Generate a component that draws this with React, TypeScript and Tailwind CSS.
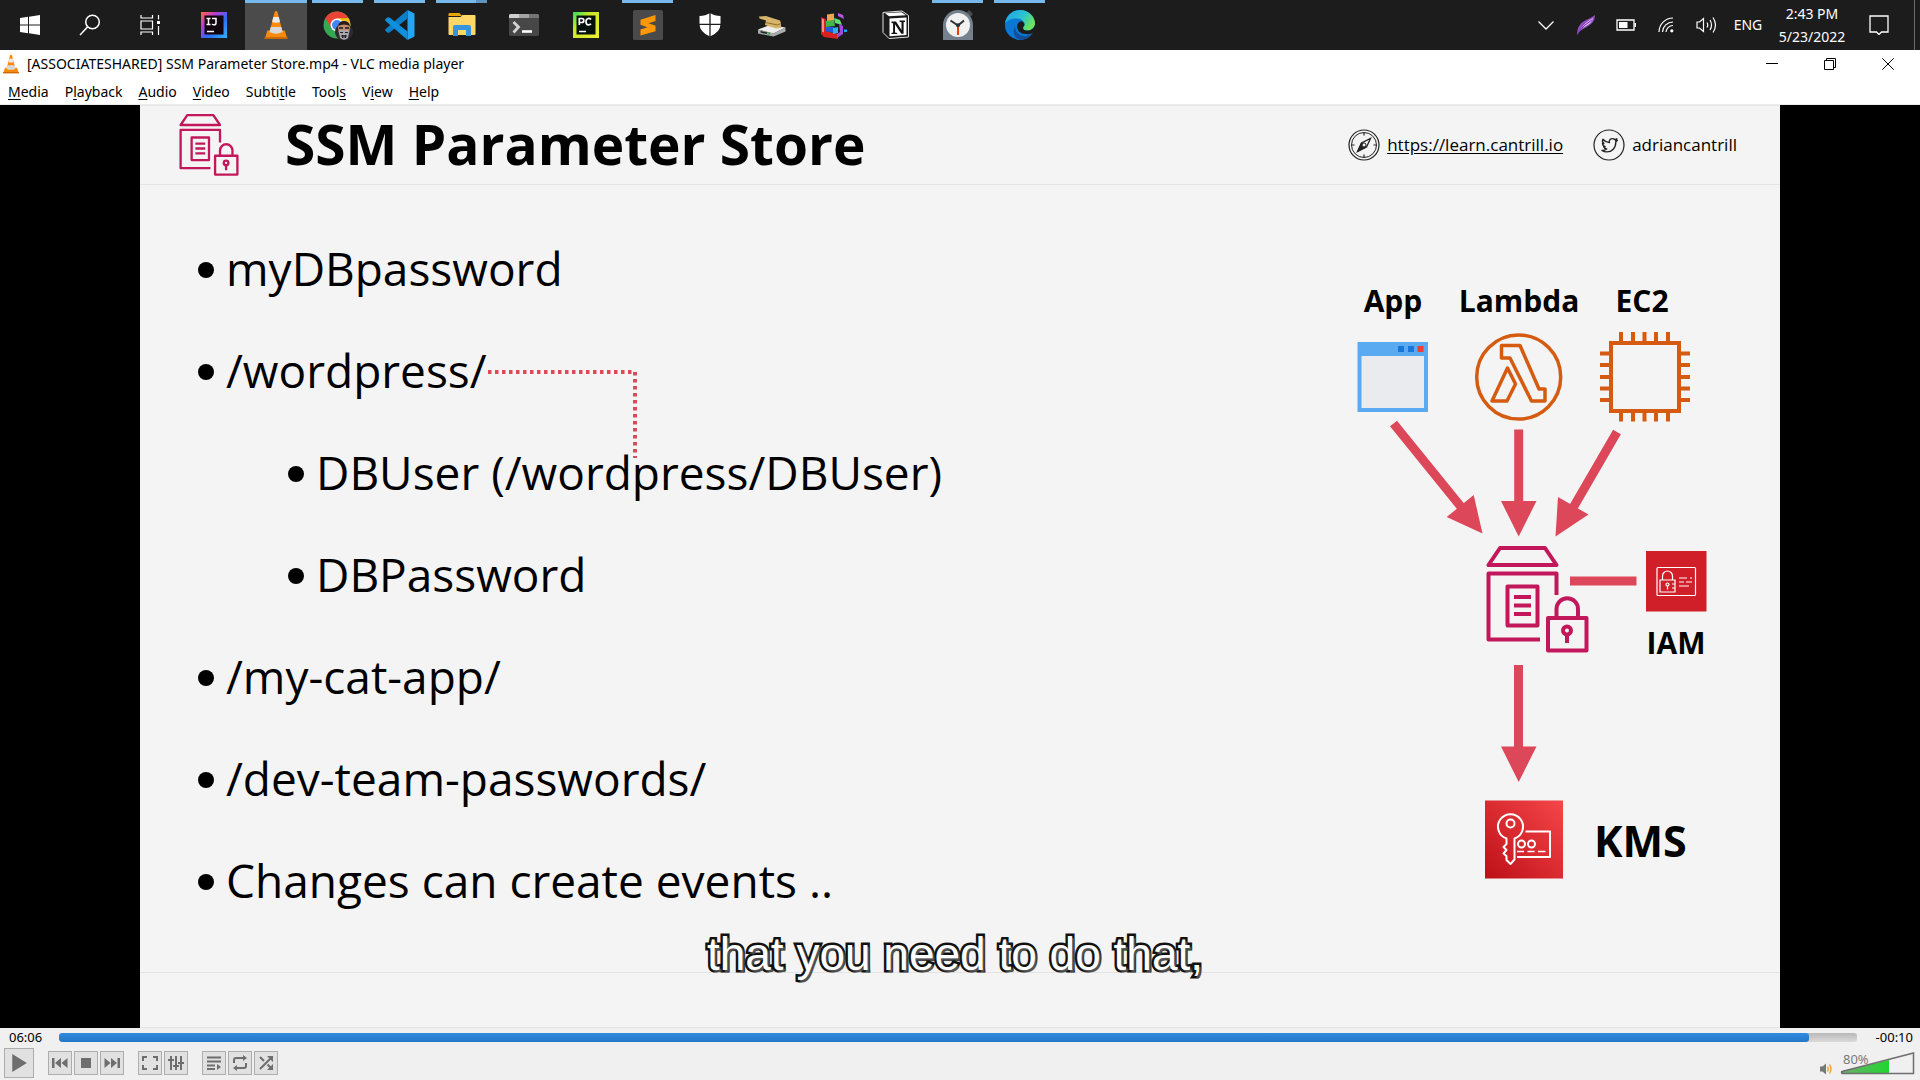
import React from "react";

type Kids = { children: React.ReactNode };

const UI = "font-['Noto_Sans','Open_Sans',sans-serif]";

function Icon({ children }: Kids) {
  return (
    <svg viewBox="0 0 30 30" className="size-[30px]" aria-hidden="true">
      {children}
    </svg>
  );
}

function Cone() {
  return (
    <>
      <path d="M5 20.500h20l3 8.500H2z" fill="#f58a0b" />
      <path d="M2 27h26l.4 2H1.600z" fill="#c96a04" />
      <path d="M13.500 1.500q1.500-1 3 0L22.500 22q-7.500 4-15 0z" fill="#ff8a0c" />
      <path d="M11.900 7h6.200l1.500 5q-4.600 1.600-9.200 0z" fill="#e9e9e9" />
      <path d="M8.900 17h12.200l1.400 5q-7.500 3.500-15 0z" fill="#d9d9d9" />
    </>
  );
}

const apps: { name: string; state?: "open" | "active" | "multi"; art: React.ReactNode }[] = [
  {
    name: "IntelliJ IDEA",
    art: (
      <>
        <defs>
          <linearGradient id="ij" x1="0" y1="0" x2="1" y2="1">
            <stop offset="0" stopColor="#fe6a3c" />
            <stop offset=".3" stopColor="#c03bd0" />
            <stop offset=".6" stopColor="#2a6df5" />
            <stop offset="1" stopColor="#2fb4f8" />
          </linearGradient>
        </defs>
        <rect x="2" y="2" width="26" height="26" fill="url(#ij)" />
        <rect x="5.500" y="5.500" width="19" height="19" fill="#12030f" />
        <path d="M7.500 8.500h4M9.500 8.500v6M7.500 14.500h4M13 8.500h4v4.500q0 1.800-2 1.800-1.200 0-2-.8" stroke="#fff" strokeWidth="1.500" fill="none" />
        <path d="M8 21.500h7" stroke="#fff" strokeWidth="1.500" />
      </>
    ),
  },
  { name: "VLC media player", state: "active", art: <Cone /> },
  {
    name: "Google Chrome",
    state: "open",
    art: (
      <>
        <circle cx="14" cy="15" r="13.500" fill="#34a853" />
        <path d="M2.300 8.300A13.500 13.500 0 0 1 25.700 8.300L14 9l-5.500 9z" fill="#ea4335" />
        <path d="M25.700 8.300A13.500 13.500 0 0 1 14 28.500l6-10.500-6-9.700z" fill="#fbc116" />
        <circle cx="14" cy="15" r="6.500" fill="#fff" />
        <circle cx="14" cy="15" r="5" fill="#4285f4" />
        <circle cx="21" cy="22" r="9" fill="#2c2a2d" />
        <path d="M15 17q1-6 6-6t6 6l-.5 4h-11z" fill="#c08d70" />
        <path d="M15 16q1-5 6-5t6 5q-6-3-12 0z" fill="#2a1d1a" />
        <path d="M16 18h4M22 18h4" stroke="#1d1715" strokeWidth="1.600" />
        <path d="M15.500 21q5.500-2 11 0l-1.500 7q-4 3.500-8 0z" fill="#a6a8ae" />
        <path d="M17 22.500h3M22 22.500h3M18 26h6M19.500 25v3M21 25v3M22.500 25v3" stroke="#222" strokeWidth="1" />
      </>
    ),
  },
  {
    name: "Visual Studio Code",
    state: "open",
    art: (
      <>
        <path d="M22.500 0 29.500 3.500V26.500L22.500 30z" fill="#26a6f0" />
        <path d="M22.500 0v8.500L4.500 22.500Q3 23.300 2 22.300L.6 21q-1-1 0-2z" fill="#0d7fc9" />
        <path d="M22.500 30v-8.500L4.500 7.500Q3 6.700 2 7.700L.6 9q-1 1 0 2z" fill="#0f8fdd" />
      </>
    ),
  },
  {
    name: "File Explorer",
    state: "multi",
    art: (
      <>
        <path d="M1.500 4q0-1 1-1h10l2.500 3h-13.500z" fill="#e8a202" />
        <path d="M1.500 7h12l2-2h12q1 0 1 1v18q0 1-1 1h-25q-1 0-1-1z" fill="#ffd668" />
        <path d="M6 26v-9q0-2 2-2h14q2 0 2 2v9h-5v-6h-8v6z" fill="#3a93dd" />
      </>
    ),
  },
  {
    name: "Terminal",
    art: (
      <>
        <rect x="0" y="4" width="30" height="22" rx="1.500" fill="#474747" />
        <path d="M0 8V5.500Q0 4 1.500 4H10v4z" fill="#cfcfcf" />
        <path d="M10 4h10v4H10z" fill="#a5a5a5" />
        <path d="M20 4h8.500Q30 4 30 5.500V8H20z" fill="#757575" />
        <path d="m4.500 12 5 5-5 5.500" stroke="#d4d4d4" strokeWidth="2.800" fill="none" />
        <path d="M13 21.500h10" stroke="#fff" strokeWidth="2.600" />
      </>
    ),
  },
  {
    name: "PyCharm",
    art: (
      <>
        <defs>
          <linearGradient id="pc" x1="0" y1="0" x2="1" y2="1">
            <stop offset="0" stopColor="#21e06a" />
            <stop offset=".35" stopColor="#c9e820" />
            <stop offset="1" stopColor="#f0f03a" />
          </linearGradient>
        </defs>
        <rect x="2" y="2" width="26" height="26" fill="url(#pc)" />
        <rect x="5.500" y="5.500" width="19" height="19" fill="#05100a" />
        <path d="M8.300 15V8.500h2.500q2 0 2 2t-2 2H8.300M20 9.500q-1-1.200-2.700-1-2.300.3-2.300 3.200t2.300 3.200q1.700.1 2.700-1.100" stroke="#fff" strokeWidth="1.700" fill="none" />
        <path d="M8 21.500h7" stroke="#fff" strokeWidth="1.500" />
      </>
    ),
  },
  {
    name: "Sublime Text",
    state: "open",
    art: (
      <>
        <rect width="30" height="30" rx="1.500" fill="#4a4a4a" />
        <path d="M22.500 5v6l-7 2.300 7 2.500v5.400L7.500 25.500v-6l7-2.300-7-2.500V9.800z" fill="#ff9800" />
      </>
    ),
  },
  {
    name: "Windows Security",
    art: (
      <>
        <path d="M15 3q4.500 3 10.500 3v8q0 8-10.500 12.500Q4.500 22 4.500 14V6Q10.500 6 15 3z" fill="#fff" />
        <path d="M15 2v25M4 14.300h22" stroke="#1c1c1c" strokeWidth="1.300" />
      </>
    ),
  },
  {
    name: "Storage Cleaner",
    art: (
      <>
        <path d="M1 19.500 13 15l15.500 2.500-12 6z" fill="#efefef" />
        <path d="M1 19.500 16.500 23.500 28.500 17.500v4L16.500 26.500 1 23.500z" fill="#a9adad" />
        <path d="m3.500 21 9 2v1.600l-9-2z" fill="#222" />
        <path d="m10 23.300 2 .5" stroke="#35e04a" strokeWidth="1.500" />
        <path d="M2 6.500 9 6l14 4.500 1 2.500v5l-5 .5L8 15l1-4.500-6.500-2z" fill="#d6b56a" />
        <path d="m8.500 12.500 12 2.500 3.500-1.500" stroke="#8e6d2c" fill="none" />
      </>
    ),
  },
  {
    name: "Disk Defragmenter",
    art: (
      <>
        <path d="m2 7 5 2v12l12 3v5L5 27 2 24z" fill="#d8221f" />
        <path d="m3 8.500 2 1v13l-2-1z" fill="#ff8f88" />
        <path d="m8 4.500 7-1v7l-7 1z" fill="#f0a64c" />
        <path d="m7 11 8-1 1 6-9 1z" fill="#45b64b" />
        <path d="m15 8 6 2 2 5-7-2z" fill="#5fe070" />
        <path d="m6 17 9 0v6l-9-2z" fill="#1e5be0" />
        <path d="m14 18 5-1v6l-5 1z" fill="#2fb2f2" />
        <path d="m19 3 5 2 1 4-6-3z" fill="#b458e8" />
        <path d="m20 14 4 2v8l-6 4v-4l3-2z" fill="#a04be0" />
        <path d="M25 19.500h3v2.500h-3z" fill="#18a6ee" />
      </>
    ),
  },
  {
    name: "Notion",
    art: (
      <>
        <path d="m2 2.500 19-1.500 6.500 4.500V27L8 28.500 2 22.500z" fill="#1a1a1a" stroke="#e2e2e2" strokeWidth="1" />
        <path d="m4 3.200 16.500-1 4.500 3L8 6.200z" fill="#fff" />
        <path d="M8.500 8.500 25.500 7.500V25L8.500 26.300z" fill="#fff" />
        <path d="M10.500 11.500h4.500l5.500 8.500v-7.800l-2-.4v-1.200h5.500v1.200l-1.400.5v11.400h-2.300L14 14.200v8.300l2.200.5v1.100h-5.700V23l1.600-.5V13.300l-1.600-.4z" fill="#111" />
      </>
    ),
  },
  {
    name: "Clock",
    state: "open",
    art: (
      <>
        <path d="m23 3 3-3 4 4-3 3z" fill="#4b4d50" />
        <path d="M0 15a15 15 0 0 1 30 0v15H0z" fill="#75818c" />
        <circle cx="15" cy="15" r="12" fill="#f1f1f1" />
        <path d="m7.500 10.500 7.500 5 6-5" stroke="#2d3036" strokeWidth="2" fill="none" />
        <path d="M15 16v9" stroke="#e8400c" strokeWidth="2" />
        <circle cx="15" cy="15.200" r="2" fill="#2d3036" />
      </>
    ),
  },
  {
    name: "Microsoft Edge",
    state: "open",
    art: (
      <>
        <defs>
          <linearGradient id="edge" x1="0" y1="0" x2="1" y2=".5">
            <stop offset="0" stopColor="#1f9fe8" />
            <stop offset=".6" stopColor="#2bc3d2" />
            <stop offset="1" stopColor="#6be35a" />
          </linearGradient>
        </defs>
        <circle cx="15" cy="15" r="15" fill="#0b78d4" />
        <path d="M0 13.500C1 5 8 0 15 0c9 0 15 7 15 13 0 5-4 7.500-7.500 7.500-3 0-4.500-1-4.500-2.500 0-1 1.500-2 1.500-4 0-3.500-4-5.500-8.500-5.500-5 0-9 2-11 5z" fill="url(#edge)" />
        <path d="M10 16c0 7 5 10 10 10 3 0 6-1.500 7-2.500C24.500 27.500 20 30 15 30 9 28 7 22 10 16z" fill="#12509c" />
        <path d="M30 15v7l-3.500 1.500q-2.500 1-6 .5c-5 0-8.500-3.500-8.500-7.500 0-2.500 1.500-4.500 4-5.500 3 1 3.500 3 3.500 3.500 0 1.500-1.500 2-1.500 3.500 0 2 2 2.500 4.500 2.500 3.500 0 6.500-2 7.500-5.500z" fill="#1c1c1c" />
      </>
    ),
  },
];

const bars = {
  open: "left-[5px] right-[6px]",
  active: "left-0 right-0",
  multi: "left-[5px] right-[6px] border-r-[11px] border-[#5f92c0]",
};

function Taskbar() {
  return (
    <header className="flex h-[50px] shrink-0 bg-[#1c1c1c] text-white">
      <button aria-label="Start" className="grid w-[60px] place-items-center">
        <svg viewBox="0 0 20 20" className="size-5" fill="#fff">
          <path d="M0 3 8 1.800V9.500H0zM9 1.700 20 0v9.500H9zM0 10.500h8v7.700L0 17zM9 10.500h11V20L9 18.300z" />
        </svg>
      </button>
      <button aria-label="Search" className="grid w-[60px] place-items-center">
        <svg viewBox="0 0 22 22" className="size-[22px]" fill="none" stroke="#fff" strokeWidth="1.500">
          <circle cx="13.500" cy="8" r="6.800" />
          <path d="M8.700 12.800 1 21" />
        </svg>
      </button>
      <button aria-label="Task View" className="mr-[3px] grid w-[60px] place-items-center">
        <svg viewBox="0 0 20 20" className="size-5" fill="none" stroke="#fff" strokeWidth="1.200">
          <path d="M1 0v3h11.500V0M1 20v-3h11.500v3M1 6h11.500v8H1zM18.500 0v4.500M18.500 11v9" />
          <path d="M17 6h3v3h-3z" fill="#fff" stroke="none" />
        </svg>
      </button>
      <nav className="flex" aria-label="Applications">
        {apps.map((a) => (
          <button
            key={a.name}
            aria-label={a.name}
            className={`relative grid w-[62px] place-items-center ${a.state === "active" ? "bg-[#4b4b4b]" : ""}`}
          >
            {a.state && <span className={`absolute top-0 h-[3px] bg-[#76b9ed] ${bars[a.state]}`} />}
            <Icon>{a.state === "active" ? <g transform="translate(2 0) scale(.87 1)">{a.art}</g> : a.art}</Icon>
          </button>
        ))}
      </nav>
      <div className="ml-auto flex items-center">
        <button aria-label="Show hidden icons" className="grid w-10 place-items-center">
          <svg viewBox="0 0 16 9" className="h-[9px] w-4" fill="none" stroke="#fff" strokeWidth="1.300">
            <path d="m.5.500 7.500 7.500L15.500.5" />
          </svg>
        </button>
        <button aria-label="Feather" className="grid w-10 place-items-center">
          <svg viewBox="0 0 20 20" className="size-5">
            <path d="M1 20C1 12 4 8 10 5q5-2 9-5 0 6-4 9T4 16z" fill="#8e4ec0" />
            <path d="M4 15Q9 7 17 3q-1 5-6 7.500T4 15z" fill="#dcb8f4" />
            <path d="M2 18Q7 10 16 5" stroke="#7a35ae" fill="none" />
          </svg>
        </button>
        <button aria-label="Battery" className="grid w-10 place-items-center">
          <svg viewBox="0 0 20 12" className="h-3 w-5" fill="none" stroke="#fff">
            <path d="M1 1h17v10H1z" strokeWidth="1.300" />
            <path d="M3 3h8.500v6H3zM18.500 4H20v4h-1.500z" fill="#fff" stroke="none" />
          </svg>
        </button>
        <button aria-label="Network" className="grid w-10 place-items-center">
          <svg viewBox="0 0 16 16" className="size-4" fill="none" stroke="#fff" strokeWidth="1.200">
            <path d="M1 15A14 14 0 0 1 15 1M4.500 15A10.500 10.500 0 0 1 15 5M8 15a7 7 0 0 1 7-6.500" />
            <circle cx="13.800" cy="13.800" r="1.600" fill="#fff" stroke="none" />
          </svg>
        </button>
        <button aria-label="Volume" className="grid w-10 place-items-center">
          <svg viewBox="0 0 21 18" className="h-[18px] w-[21px]" fill="none" stroke="#fff" strokeWidth="1.200">
            <path d="M1 6h2.500L7.500 2.500v13L3.500 12H1zM11 6.500q1.500 2.500 0 5M14 4q3 5 0 10M17 1.500q5 7.500 0 15" />
          </svg>
        </button>
        <button className={`w-11 text-center text-sm ${UI}`}>ENG</button>
        <button className={`flex w-[84px] flex-col items-center text-sm leading-[23px] ${UI}`}>
          <span>2:43 PM</span>
          <span>5/23/2022</span>
        </button>
        <button aria-label="Notifications" className="grid w-[50px] place-items-center">
          <svg viewBox="0 0 20 20" className="size-5" fill="none" stroke="#fff" strokeWidth="1.300">
            <path d="M1 1h18v16h-6.500L10 19.500 7.500 17H1z" />
          </svg>
        </button>
        <span className="ml-[10px] h-[50px] w-[6px] border-l border-[#6b6b6b]" />
      </div>
    </header>
  );
}

const menus: [string, string, string][] = [
  ["", "M", "edia"],
  ["P", "l", "ayback"],
  ["", "A", "udio"],
  ["", "V", "ideo"],
  ["Subti", "t", "le"],
  ["Tool", "s", ""],
  ["V", "i", "ew"],
  ["", "H", "elp"],
];

function TitleBar() {
  return (
    <div className={`shrink-0 bg-white text-black ${UI}`}>
      <div className="flex h-7 items-center">
        <svg viewBox="0 0 30 30" className="ml-[2px] h-5 w-[18px]" preserveAspectRatio="none" aria-hidden="true">
          <Cone />
        </svg>
        <h1 className="ml-[7px] text-sm leading-[30px]">[ASSOCIATESHARED] SSM Parameter Store.mp4 - VLC media player</h1>
        <div className="mr-[3px] ml-auto flex">
          <button aria-label="Minimize" className="grid h-7 w-[58px] place-items-center">
            <svg viewBox="0 0 12 12" className="size-3" stroke="#000">
              <path d="M0 5.500h12" />
            </svg>
          </button>
          <button aria-label="Restore" className="grid h-7 w-[58px] place-items-center">
            <svg viewBox="0 0 12 12" className="size-3" stroke="#000" fill="none">
              <path d="M.5 2.500h9v9h-9zM2.500 2.500v-2h9v9h-2" />
            </svg>
          </button>
          <button aria-label="Close" className="grid h-7 w-[58px] place-items-center">
            <svg viewBox="0 0 12 12" className="size-3" stroke="#000">
              <path d="m.3.300 11.400 11.400M11.700.3.300 11.700" />
            </svg>
          </button>
        </div>
      </div>
      <nav className="flex h-[27px] gap-4 border-b border-[#ececec] pl-2 text-sm leading-7">
        {menus.map(([a, b, c]) => (
          <button key={a + b + c}>
            {a}
            <span className="underline underline-offset-2">{b}</span>
            {c}
          </button>
        ))}
      </nav>
    </div>
  );
}

function StoreIcon({ className }: { className: string }) {
  return (
    <svg viewBox="0 0 103 107" className={className} fill="none" stroke="#c2185b" strokeWidth="4" strokeLinejoin="round" aria-hidden="true">
      <path d="M2.500 19h68L59 2H14zM70.500 49V27.500h-68v66H54M21.500 40.500h30v39h-30z" />
      <path d="M28 51h17M28 59.500h17M28 68h17M62 72h38.500v32.500H62zM70.500 72v-9a10.700 10.700 0 0 1 21.500 0v9M81 88v9" />
      <circle cx="81" cy="84.500" r="4" />
    </svg>
  );
}

function SlideHeader() {
  return (
    <div className="flex h-20 items-center border-y border-[#e4e4e4] pr-[43px] pl-[39px]">
      <StoreIcon className="h-[62px] w-[60px]" />
      <h2 className="ml-[46px] pb-[2px] text-[55px] leading-[76px] font-bold">SSM Parameter Store</h2>
      <div className="ml-auto flex items-center text-[17px]">
        <svg viewBox="0 0 32 32" className="size-8" fill="none" stroke="#222" aria-hidden="true">
          <circle cx="16" cy="16" r="15" strokeWidth="1.200" />
          <circle cx="16" cy="16" r="12.500" />
          <path d="M16 4v2.500M16 25.500V28M4 16h2.500M25.500 16H28" strokeWidth="1.200" />
          <path d="m22.500 9.500-4 8.500-9 4.500 4-8.500z" strokeWidth="1.300" />
          <path d="m9.500 22.500 4-8.500 4.500 4z" fill="#222" />
          <circle cx="16" cy="16" r="2" fill="#f4f4f4" />
        </svg>
        <a href="https://learn.cantrill.io" className="ml-[7px] underline underline-offset-2">
          https://learn.cantrill.io
        </a>
        <svg viewBox="0 0 32 32" className="ml-[30px] size-8" fill="none" stroke="#222" aria-hidden="true">
          <circle cx="16" cy="16" r="15" strokeWidth="1.200" />
          <path
            d="M9 21.500c2 0 3.500-.5 4.700-1.500-1.500-.2-2.500-1-3-2.300h1.400c-1.500-.6-2.600-1.800-2.600-3.500l1.400.4c-1.300-1-1.800-2.700-1-4.300 1.700 2 3.800 3.100 6.500 3.300-.5-2.500 1-4 3-4 1 0 1.800.4 2.400 1l2-.8-1.200 1.900 1.700-.4-1.500 1.600c.2 6-4 10-9 10-1.800 0-3.500-.5-4.800-1.400z"
            strokeWidth="1.400"
            strokeLinejoin="round"
          />
        </svg>
        <span className="ml-[7px]">adriancantrill</span>
      </div>
    </div>
  );
}

function Bullet({ nested, children }: Kids & { nested?: boolean }) {
  return (
    <li className={`relative flex items-center gap-3 ${nested ? "ml-[90px]" : ""}`}>
      <span className="mt-1 size-4 rounded-full bg-black" />
      <span>{children}</span>
    </li>
  );
}

function Outline() {
  return (
    <ul className="flex flex-col pt-8 pl-[58px] text-[46px] leading-[102px]">
      <Bullet>myDBpassword</Bullet>
      <Bullet>
        /wordpress/
        <svg viewBox="0 0 150 90" className="absolute top-[51px] left-[290px] h-[90px] w-[150px]" fill="none" stroke="#dc4a5a" strokeWidth="4" strokeDasharray="3.500 3.500" aria-hidden="true">
          <path d="M0 2h147v86" />
        </svg>
      </Bullet>
      <Bullet nested>DBUser (/wordpress/DBUser)</Bullet>
      <Bullet nested>DBPassword</Bullet>
      <Bullet>/my-cat-app/</Bullet>
      <Bullet>/dev-team-passwords/</Bullet>
      <Bullet>Changes can create events ..</Bullet>
    </ul>
  );
}

function Diagram() {
  const label = "absolute -translate-x-1/2 text-[30px] leading-10 font-bold whitespace-nowrap";
  return (
    <div className="relative mt-[85px] mr-[50px] h-[620px] w-[400px] shrink-0">
      <svg viewBox="0 0 400 620" className="absolute inset-0 h-full w-full" fill="none" aria-hidden="true">
        <defs>
          <linearGradient id="kms" x1="0" y1="1" x2="1" y2="0">
            <stop offset="0" stopColor="#bd0f17" />
            <stop offset="1" stopColor="#f54749" />
          </linearGradient>
        </defs>
        <path d="M27.500 72H98v70H27.500z" fill="#5aaaf2" />
        <path d="M31.500 86H94v52H31.500z" fill="#e9ebee" />
        <path d="M68 76h6v6h-6zM78 76h6v6h-6z" fill="#1976d9" />
        <path d="M87.500 76h6v6h-6z" fill="#ee3f36" />
        <g stroke="#d45b10" strokeWidth="3.500" strokeLinejoin="round">
          <circle cx="188.700" cy="107" r="42" />
          <path d="M171.500 75.500H190l19 43.500h6v12h-13.500L180 88h-8.500zM177.500 98l8 16-8.500 17h-15z" />
        </g>
        <g stroke="#d45b10" strokeWidth="4">
          <path d="M281 73h68v68h-68z" />
          <path d="M291 62v10M303 62v10M314.500 62v10M326 62v10M338 62v10M291 142v9.500M303 142v9.500M314.500 142v9.500M326 142v9.500M338 142v9.500M270 83.500h10M270 95h10M270 107h10M270 118.500h10M270 130h10M350 83.500h10M350 95h10M350 107h10M350 118.500h10M350 130h10" />
        </g>
        <g stroke="#dc475a" strokeWidth="9">
          <path d="M63.500 153.500 132 238M188.700 159.500V233M287 162l-43.500 75M240 311h66.500M188.500 395v83" />
        </g>
        <path d="M116.700 247 143.700 225 152.500 263.500zM171 231h35.500l-17.800 35.500zM228 227l30.500 17.500-33 22zM171 476.500h35.500l-17.800 35.500z" fill="#dc475a" />
        <path d="M316 281h60.500v60.500H316z" fill="#d01f28" />
        <g stroke="#fff" strokeWidth="1.200">
          <rect x="327" y="297.500" width="38.500" height="28" rx="1" />
          <path d="M330 310h15v12h-15zM332.500 310v-4a5 5 0 0 1 10 0v4M337.500 315.500v4M342 314h3M342 318h3" />
          <circle cx="337.500" cy="314.500" r="1.500" />
          <path d="M349 308h8M360 308h2M349 312h5M356 312h6M349 316h10" />
        </g>
        <path d="M155 530.500h78v78h-78z" fill="url(#kms)" />
        <g stroke="#fff" strokeWidth="2" strokeLinejoin="round">
          <path d="M176.500 568.500a12.500 12.500 0 1 1 8 0v21l-4 4.500-4-4v-4l-3-2.500 3-3.500-3-3 3-3z" />
          <circle cx="180.500" cy="553.500" r="4" />
          <path d="M195.500 561.500H220v25.500h-33" />
          <circle cx="191.500" cy="574" r="3.500" />
          <circle cx="201.500" cy="574" r="3.500" />
          <path d="M187 581.500h7M197.500 581.500h7M208 581.500h7.500" strokeWidth="1.600" />
        </g>
      </svg>
      <StoreIcon className="absolute top-[276px] left-[156px] h-[107px] w-[103px]" />
      <span className={`${label} top-[11px] left-[63px]`}>App</span>
      <span className={`${label} top-[11px] left-[189px]`}>Lambda</span>
      <span className={`${label} top-[11px] left-[312px]`}>EC2</span>
      <span className={`${label} top-[353px] left-[346px]`}>IAM</span>
      <span className="absolute top-[541px] left-[264px] text-[43px] leading-[60px] font-bold">KMS</span>
    </div>
  );
}

function Video() {
  return (
    <main className="flex min-h-0 flex-1 justify-center bg-black">
      <section className="relative flex w-full max-w-[1640px] flex-col bg-[#f4f4f4] font-['Open_Sans','Noto_Sans',sans-serif] text-black">
        <SlideHeader />
        <div className="flex flex-1 justify-between border-b border-[#e4e4e4]">
          <Outline />
          <Diagram />
        </div>
        <div className="h-[55px] border-b border-[#e4e4e4]" />
        <p className="absolute inset-x-0 bottom-12 -ml-[10px] text-center font-['Liberation_Sans',Arial,sans-serif] text-[46px] leading-[52px] text-white [paint-order:stroke_fill] [-webkit-text-stroke:5px_#111] [text-shadow:2px_2px_1px_#555]">
          that you need to do that,
        </p>
      </section>
    </main>
  );
}

function Ctl({ label, big, children }: Kids & { label: string; big?: boolean }) {
  return (
    <button
      aria-label={label}
      className={`grid place-items-center border border-[#adadad] bg-[#e1e1e1] ${big ? "size-[30px]" : "size-6"}`}
    >
      <svg viewBox="0 0 16 16" className={big ? "size-[18px]" : "size-4"} fill="#6e6e6e" stroke="#6e6e6e" strokeWidth="0">
        {children}
      </svg>
    </button>
  );
}

function Controls() {
  const line = { fill: "none", strokeWidth: 2 };
  return (
    <footer className="h-[52px] shrink-0 bg-[#f0f0f0] font-['Noto_Sans',sans-serif] text-[13px] text-black">
      <div className="flex h-[19px] items-center pr-[7px] pl-[9px]">
        <span className="w-[50px]">06:06</span>
        <div className="relative h-[9px] flex-1 overflow-hidden rounded-[3px] bg-gradient-to-b from-[#b9b9b9] to-[#dadada]">
          <div className="h-full rounded-[3px] bg-gradient-to-b from-[#2f8be0] to-[#2577c8]" style={{ width: `${(366 / 376) * 100}%` }} />
          <input type="range" aria-label="Position" min={0} max={376} defaultValue={366} className="absolute inset-0 h-full w-full opacity-0" />
        </div>
        <span className="w-[56px] text-right">-00:10</span>
      </div>
      <div className="flex items-center px-1 pt-px">
        <Ctl label="Play" big>
          <path d="M2 0v16l13-8z" />
        </Ctl>
        <div className="ml-[14px] flex gap-[2px]">
          <Ctl label="Previous">
            <path d="M0 3h2.500v10H0zM9 3v10L3 8zM15.500 3v10l-6-5z" />
          </Ctl>
          <Ctl label="Stop">
            <path d="M3 3h10v10H3z" />
          </Ctl>
          <Ctl label="Next">
            <path d="M13.500 3H16v10h-2.500zM7 3v10l6-5zM.5 3v10l6-5z" />
          </Ctl>
        </div>
        <div className="ml-[14px] flex gap-[2px]">
          <Ctl label="Fullscreen">
            <path {...line} d="M1 6V2h4M11 2h4v4M15 10v4h-4M5 14H1v-4" />
          </Ctl>
          <Ctl label="Extended settings">
            <path {...line} d="M3 1v14M8 1v14M13 1v14M0 5h6M5 11h6M10 8h6" />
          </Ctl>
        </div>
        <div className="ml-[14px] flex gap-[2px]">
          <Ctl label="Playlist">
            <path {...line} d="M1 2.500h14M1 6.500h14M1 10.500h8M1 14h8" />
            <path d="M11 9v6l4-3z" />
          </Ctl>
          <Ctl label="Loop">
            <path {...line} d="M2 8V5q0-2 2-2h9M14 8v3q0 2-2 2H3" />
            <path d="M11 0v6l4-3zM5 10v6l-4-3z" />
          </Ctl>
          <Ctl label="Shuffle">
            <path {...line} d="m2 2 4 4M9.500 9.500 13 13M2 14 13 3" />
            <path d="M9 1h6v6zM9 15h6V9z" />
          </Ctl>
        </div>
        <div className="ml-auto flex items-end gap-2">
          <button aria-label="Mute">
            <svg viewBox="0 0 12 12" className="size-3" fill="none">
              <path d="M0 3.500h2.500L6 .5v11L2.500 8.500H0z" fill="#777" />
              <path d="M7.500 3.500q1.500 2.500 0 5M9.500 1.500q3 4.500 0 9" stroke="#f09a2a" strokeWidth="1.300" />
            </svg>
          </button>
          <div className="relative h-[23px] w-[76px]">
            <svg viewBox="0 0 76 23" className="h-full w-full" aria-hidden="true">
              <defs>
                <linearGradient id="vol">
                  <stop offset="0" stopColor="#6fae6f" />
                  <stop offset="1" stopColor="#1fd62f" />
                </linearGradient>
              </defs>
              <path d="M2 21v-1.500L49 8v13z" fill="url(#vol)" />
              <path d="M2 21.500q-1-1.500 0-2L73.500 1V21.500z" fill="none" stroke="#6e6e6e" strokeWidth="1.500" />
            </svg>
            <span className="absolute top-0 left-[3px] text-[13px] leading-[14px] text-[#7a7a7a]">80%</span>
            <input type="range" aria-label="Volume" min={0} max={125} defaultValue={80} className="absolute inset-0 h-full w-full opacity-0" />
          </div>
        </div>
      </div>
    </footer>
  );
}

export default function App() {
  return (
    <div className="flex min-h-screen flex-col overflow-hidden">
      <Taskbar />
      <TitleBar />
      <Video />
      <Controls />
    </div>
  );
}
